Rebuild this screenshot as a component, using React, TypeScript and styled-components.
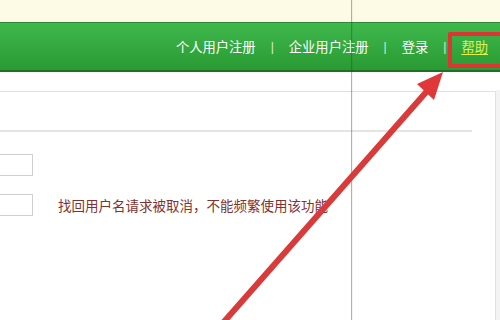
import React from "react";
import styled, { createGlobalStyle } from "styled-components";

const Global = createGlobalStyle`
  html, body { margin: 0; padding: 0; background: #ffffff; }
  body { font-family: "Noto Sans CJK SC", "Noto Sans", sans-serif; }
`;

const Page = styled.div`
  position: relative;
  width: 500px;
  height: 320px;
  overflow: hidden;
  background: #ffffff;
  display: flex;
  flex-direction: column;
`;

const TopStrip = styled.div`
  height: 22px;
  flex: none;
  background: #fdfbe6;
`;

const NavBar = styled.div`
  height: 47px;
  flex: none;
  border-top: 1px solid #2b8a33;
  border-bottom: 2px solid #1f7026;
  background: linear-gradient(#3fb84d, #34a93f 50%, #2a9a34);
  display: flex;
  align-items: center;
  justify-content: flex-end;
  padding-right: 12px;
`;

const NavLink = styled.span<{ $active?: boolean }>`
  font-size: 13.3px;
  line-height: 16px;
  color: ${(p) => (p.$active ? "#e4f04a" : "#ffffff")};
  text-decoration: ${(p) => (p.$active ? "underline" : "none")};
  text-underline-offset: 2px;
  white-space: nowrap;
`;

const Sep = styled.span`
  font-family: "Liberation Sans", sans-serif;
  font-size: 12px;
  color: #d8eed8;
  padding: 0 15px;
`;

const Body = styled.div`
  flex: 1;
  padding-top: 19px;
  background: #ffffff;
  display: flex;
`;

const Panel = styled.div`
  flex: 1;
  margin-left: -1px;
  margin-right: 4px;
  border: 1px solid #e0e0e0;
  border-bottom: none;
  display: flex;
  flex-direction: column;
`;

const PanelHeader = styled.div`
  height: 38px;
  margin-right: 23px;
  border-bottom: 2px solid #e4e4e4;
`;

const Form = styled.div`
  padding-top: 22px;
  display: flex;
  flex-direction: column;
  gap: 18px;
`;

const Row = styled.div`
  display: flex;
  align-items: center;
  gap: 25px;
`;

const Input = styled.div`
  width: 60px;
  height: 20px;
  margin-left: -29px;
  border: 1px solid #cfcfcf;
  background: #ffffff;
`;

const ErrorText = styled.span`
  font-size: 13.5px;
  color: #84302f;
  white-space: nowrap;
`;

const EdgeLine = styled.div`
  position: absolute;
  top: 0;
  bottom: 0;
  left: 351px;
  width: 1px;
  background: rgba(60, 60, 60, 0.4);
  box-shadow: 1px 0 1px rgba(0, 0, 0, 0.06);
`;

const RightShade = styled.div`
  position: absolute;
  top: 90px;
  bottom: 0;
  left: 496px;
  right: 0;
  background: #f3f3f3;
`;

const HighlightBox = styled.div`
  position: absolute;
  left: 448px;
  top: 32px;
  width: 56px;
  height: 36px;
  box-sizing: border-box;
  border: 4px solid #dd3434;
  border-radius: 2px;
`;

const Overlay = styled.svg`
  position: absolute;
  left: 0;
  top: 0;
  pointer-events: none;
`;

export default function App() {
  return (
    <>
      <Global />
      <Page>
        <TopStrip />
        <NavBar>
          <NavLink>个人用户注册</NavLink>
          <Sep>|</Sep>
          <NavLink>企业用户注册</NavLink>
          <Sep>|</Sep>
          <NavLink>登录</NavLink>
          <Sep>|</Sep>
          <NavLink $active>帮助</NavLink>
        </NavBar>
        <Body>
          <Panel>
            <PanelHeader />
            <Form>
              <Row>
                <Input />
              </Row>
              <Row>
                <Input />
                <ErrorText>找回用户名请求被取消，不能频繁使用该功能</ErrorText>
              </Row>
            </Form>
          </Panel>
        </Body>
        <RightShade />
        <EdgeLine />
        <HighlightBox />
        <Overlay width="500" height="320" viewBox="0 0 500 320">
          <line x1="222" y1="324" x2="428" y2="90" stroke="#d93a3a" strokeWidth="6" strokeLinecap="round" />
          <polygon points="443,72 417,84 434,100" fill="#e03838" />
        </Overlay>
      </Page>
    </>
  );
}
